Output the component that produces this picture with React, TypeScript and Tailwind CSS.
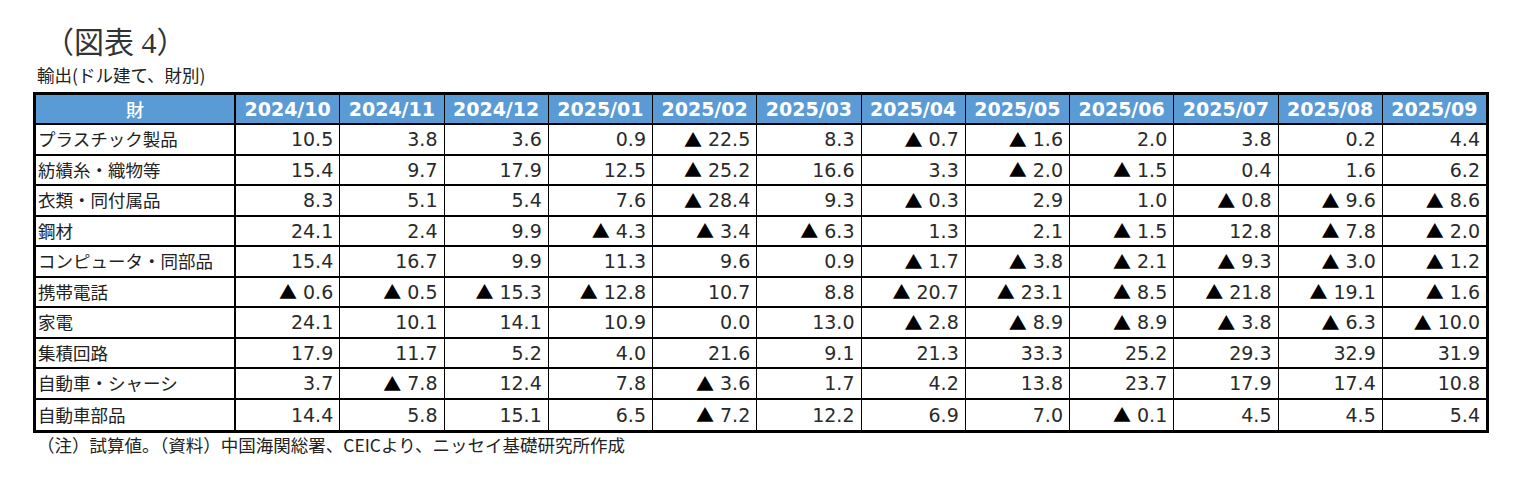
import React from "react";

const cols = [
  "2024/10", "2024/11", "2024/12", "2025/01", "2025/02", "2025/03",
  "2025/04", "2025/05", "2025/06", "2025/07", "2025/08", "2025/09",
];

// negative values are shown with ▲
const rows: [string, number[]][] = [
  ["プラスチック製品", [10.5, 3.8, 3.6, 0.9, -22.5, 8.3, -0.7, -1.6, 2.0, 3.8, 0.2, 4.4]],
  ["紡績糸・織物等", [15.4, 9.7, 17.9, 12.5, -25.2, 16.6, 3.3, -2.0, -1.5, 0.4, 1.6, 6.2]],
  ["衣類・同付属品", [8.3, 5.1, 5.4, 7.6, -28.4, 9.3, -0.3, 2.9, 1.0, -0.8, -9.6, -8.6]],
  ["鋼材", [24.1, 2.4, 9.9, -4.3, -3.4, -6.3, 1.3, 2.1, -1.5, 12.8, -7.8, -2.0]],
  ["コンピュータ・同部品", [15.4, 16.7, 9.9, 11.3, 9.6, 0.9, -1.7, -3.8, -2.1, -9.3, -3.0, -1.2]],
  ["携帯電話", [-0.6, -0.5, -15.3, -12.8, 10.7, 8.8, -20.7, -23.1, -8.5, -21.8, -19.1, -1.6]],
  ["家電", [24.1, 10.1, 14.1, 10.9, 0.0, 13.0, -2.8, -8.9, -8.9, -3.8, -6.3, -10.0]],
  ["集積回路", [17.9, 11.7, 5.2, 4.0, 21.6, 9.1, 21.3, 33.3, 25.2, 29.3, 32.9, 31.9]],
  ["自動車・シャーシ", [3.7, -7.8, 12.4, 7.8, -3.6, 1.7, 4.2, 13.8, 23.7, 17.9, 17.4, 10.8]],
  ["自動車部品", [14.4, 5.8, 15.1, 6.5, -7.2, 12.2, 6.9, 7.0, -0.1, 4.5, 4.5, 5.4]],
];

const cjk = '"Noto Sans CJK JP", "Noto Sans", sans-serif';
const num = '"DejaVu Sans", "Noto Sans CJK JP", sans-serif';

function Value({ v }: { v: number }) {
  if (v >= 0) return <>{v.toFixed(1)}</>;
  return (
    <>
      <span className="text-[18px] text-black mr-[6px]" style={{ fontFamily: cjk }}>▲</span>
      {Math.abs(v).toFixed(1)}
    </>
  );
}

export default function App() {
  return (
    <div className="w-[1522px] h-[479px] bg-white text-[#222]" style={{ fontFamily: cjk }}>
      <div
        className="pt-[24px] pl-[44px] text-[30px] leading-[38px] text-[#333]"
        style={{ fontFamily: '"Liberation Serif", "Noto Sans CJK JP", serif' }}
      >
        （図表 4）
      </div>
      <div className="pl-[37px] text-[17.5px] leading-[26px]">輸出(ドル建て、財別)</div>

      {/* table */}
      <div className="ml-[33px] mt-[4px] w-[1456px] border-[3px] border-black">
        <div
          className="flex h-[30px] border-b-2 border-black bg-[#5b9bd5] text-white text-[19px] font-bold"
          style={{ fontFamily: num }}
        >
          <div
            className="w-[200px] shrink-0 border-r-2 border-black flex items-center justify-center text-[18px] font-medium"
            style={{ fontFamily: cjk }}
          >
            財
          </div>
          {cols.map((c, i) => (
            <div key={c} className={`flex-1 flex items-center justify-center ${i > 0 ? "border-l border-black" : ""}`}>
              {c}
            </div>
          ))}
        </div>
        {rows.map(([name, vals], r) => (
          <div
            key={name}
            className={`flex h-[30.5px] ${r < rows.length - 1 ? "border-b-2 border-black" : ""}`}
          >
            <div className="w-[200px] shrink-0 border-r-2 border-black flex items-center pl-[2px] text-[17.5px]">
              {name}
            </div>
            {vals.map((v, i) => (
              <div
                key={i}
                className={`flex-1 flex items-center justify-end pr-[6px] text-[19px] text-[#2a2a2a] ${i > 0 ? "border-l border-black" : ""}`}
                style={{ fontFamily: num }}
              >
                <Value v={v} />
              </div>
            ))}
          </div>
        ))}
      </div>
      <div className="pl-[37px] text-[17.5px] leading-[24px]">
        （注）試算値。（資料）中国海関総署、CEICより、ニッセイ基礎研究所作成
      </div>
    </div>
  );
}
